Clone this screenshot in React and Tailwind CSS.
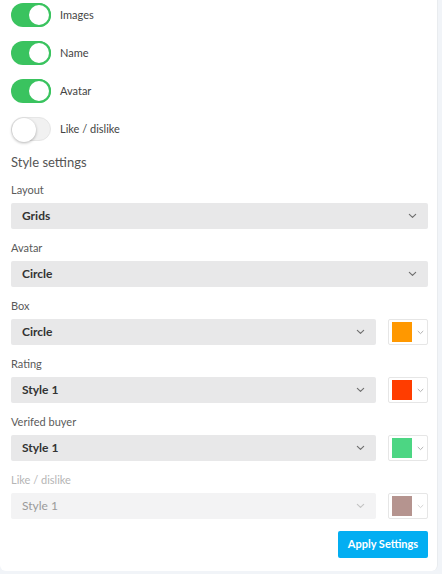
import React, { useState } from 'react';

const font = { fontFamily: 'Lato, "Noto Sans", sans-serif' };

const Chevron = ({ className }) => (
  <svg viewBox="0 0 10 6" className={className} fill="none" stroke="currentColor" strokeWidth="1.3" strokeLinecap="round" strokeLinejoin="round">
    <path d="M1.5 1.2 5 4.6 8.5 1.2" />
  </svg>
);

const Toggle = ({ on, label, onClick }) => (
  <div className="flex items-center h-6">
    <button
      onClick={onClick}
      className={`relative w-10 h-6 rounded-full shrink-0 ${on ? 'bg-[#3ac35f]' : 'bg-[#f1f1f1] border border-[#e6e6e6]'}`}
    >
      <span
        className={`absolute top-0 w-6 h-6 rounded-full bg-white ${on ? 'right-0 border-2 border-[#3ac35f]' : 'left-0 shadow-[0_1px_3px_rgba(0,0,0,0.3)]'}`}
      />
    </button>
    <span className="ml-[9px] text-[11px] text-[#444]">{label}</span>
  </div>
);

const Select = ({ value, disabled }) => (
  <div className={`flex-1 h-[26px] flex items-center justify-between pl-[11px] pr-[11px] rounded-[2px] ${disabled ? 'bg-[#f3f3f4] text-[#9a9a9a]' : 'bg-[#e8e8e9] text-[#333] font-bold'} text-[12px]`}>
    <span>{value}</span>
    <Chevron className={`w-[9px] h-[6px] ${disabled ? 'text-[#c4c4c4]' : 'text-[#6f6f6f]'}`} />
  </div>
);

const Swatch = ({ color, disabled }) => (
  <div className="w-10 h-[26px] ml-3 border border-[#e6e6e6] rounded-[2px] bg-white flex items-center pl-[3px]">
    <span className="w-5 h-5 block" style={{ backgroundColor: color }} />
    <Chevron className={`w-[7px] h-[5px] ml-[5px] ${disabled ? 'text-[#d0d0d0]' : 'text-[#aaa]'}`} />
  </div>
);

const Field = ({ label, value, color, disabled }) => (
  <div className="mt-[12px]">
    <div className={`text-[11px] h-[13px] leading-[13px] mb-[7px] ${disabled ? 'text-[#b5b5b5]' : 'text-[#5a5a5a]'}`}>{label}</div>
    <div className="flex">
      <Select value={value} disabled={disabled} />
      {color && <Swatch color={color} disabled={disabled} />}
    </div>
  </div>
);

export default function App() {
  const [toggles, setToggles] = useState({ images: true, name: true, avatar: true, like: false });
  const flip = (k) => setToggles((t) => ({ ...t, [k]: !t[k] }));

  return (
    <div className="w-[442px] h-[574px] bg-[#f1f4f8]" style={font}>
      <div className="w-[438px] h-[571px] bg-white rounded-b-[6px] border-r border-[#e9ecef] pl-[11px] pr-[9px] pt-[3px]">
        <div className="flex flex-col gap-[14px]">
          <Toggle on={toggles.images} label="Images" onClick={() => flip('images')} />
          <Toggle on={toggles.name} label="Name" onClick={() => flip('name')} />
          <Toggle on={toggles.avatar} label="Avatar" onClick={() => flip('avatar')} />
          <Toggle on={toggles.like} label="Like / dislike" onClick={() => flip('like')} />
        </div>
        <div className="mt-[12px] text-[13px] text-[#555] leading-[18px]">Style settings</div>
        <Field label="Layout" value="Grids" />
        <Field label="Avatar" value="Circle" />
        <Field label="Box" value="Circle" color="#ff9800" />
        <Field label="Rating" value="Style 1" color="#ff3d00" />
        <Field label="Verifed buyer" value="Style 1" color="#4cd683" />
        <Field label="Like / dislike" value="Style 1" color="#b5948f" disabled />
        <div className="flex justify-end mt-3">
          <button className="w-[90px] h-[27px] bg-[#03aef2] text-white text-[11px] font-bold rounded-[2px]">
            Apply Settings
          </button>
        </div>
      </div>
    </div>
  );
}
